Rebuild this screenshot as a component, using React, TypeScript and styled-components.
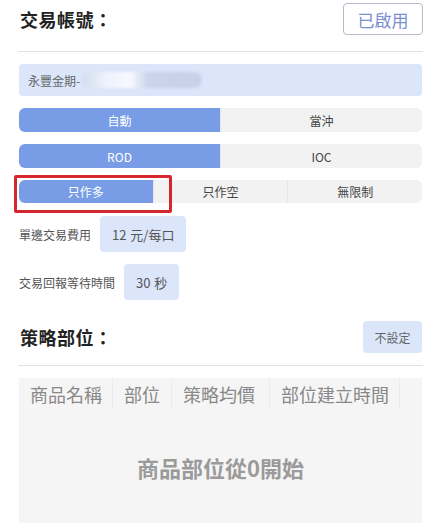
import styled, { createGlobalStyle } from 'styled-components';

const GlobalStyle = createGlobalStyle`
    html, body {
        margin: 0;
        padding: 0;
        background: #ffffff;
    }
    body {
        font-family: "Noto Sans CJK TC", "Noto Sans", "Liberation Sans", sans-serif;
        color: #333;
    }
`

const Page = styled.div`
    width: 435px;
    box-sizing: border-box;
    padding: 3px 13px 0 19px;
    display: flex;
    flex-direction: column;
`

const SectionHeader = styled.div<{ $h: number; $mt?: number }>`
    display: flex;
    align-items: center;
    justify-content: space-between;
    height: ${(p) => p.$h}px;
    margin-top: ${(p) => p.$mt ?? 0}px;
`

const Title = styled.div`
    font-size: 18px;
    font-weight: 700;
    color: #222;
    letter-spacing: 0.5px;
    padding-left: 1px;
`

const OutlineButton = styled.button`
    height: 32px;
    width: 80px;
    margin-right: -1px;
    border: 1px solid #b3bccf;
    border-radius: 4px;
    background: #fff;
    color: #7990d0;
    font-family: inherit;
    font-size: 17px;
    padding: 0;
`

const SoftButton = styled.button`
    height: 32px;
    width: 59px;
    border: none;
    border-radius: 4px;
    background: #dbe6fb;
    color: #666;
    font-family: inherit;
    font-size: 12px;
    padding: 0;
`

const Divider = styled.div<{ $top: number; $bottom: number }>`
    height: 1px;
    background: #e2e2e2;
    margin: ${(p) => p.$top}px -1px ${(p) => p.$bottom}px -1px;
`

const AccountField = styled.div`
    height: 32px;
    border-radius: 4px;
    background: #dbe6fb;
    display: flex;
    align-items: center;
    padding-left: 9px;
    font-size: 12px;
    color: #666;
`

const Blurred = styled.span`
    display: inline-block;
    width: 120px;
    height: 16px;
    margin-left: 2px;
    border-radius: 8px;
    background: linear-gradient(90deg, #d3dcef 0%, #eef2fb 20%, #f7f9fe 40%, #c9d3ea 55%, #c7d1e9 100%);
    filter: blur(1.5px);
`

const SegWrap = styled.div<{ $mt: number }>`
    position: relative;
    margin-top: ${(p) => p.$mt}px;
`

const SegGroup = styled.div<{ $h: number }>`
    display: flex;
    height: ${(p) => p.$h}px;
    border-radius: 6px;
    overflow: hidden;
    background: #f2f2f2;
`

const Seg = styled.div<{ $active?: boolean }>`
    flex: 1;
    display: flex;
    align-items: center;
    justify-content: center;
    font-size: 12px;
    color: ${(p) => (p.$active ? '#fff' : '#444')};
    background: ${(p) => (p.$active ? '#789de6' : '#f2f2f2')};
    & + & {
        border-left: 1px solid ${(p) => (p.$active ? '#789de6' : '#e6e6e6')};
    }
`

const Highlight = styled.div`
    position: absolute;
    left: -5px;
    top: -5px;
    width: 158px;
    height: 38px;
    box-sizing: border-box;
    border: 3px solid #d7262f;
    border-radius: 2px;
    pointer-events: none;
`

const FieldRow = styled.div<{ $mt: number }>`
    display: flex;
    align-items: center;
    gap: 9px;
    margin-top: ${(p) => p.$mt}px;
`

const FieldLabel = styled.span`
    font-size: 12px;
    color: #555;
`

const ValueBox = styled.div`
    height: 36px;
    display: flex;
    align-items: center;
    padding: 0 12px;
    border-radius: 4px;
    background: #dbe6fb;
    font-size: 13px;
    color: #555;
    word-spacing: 1px;
`

const TableBox = styled.div`
    height: 145px;
    background: #f5f5f5;
    display: flex;
    flex-direction: column;
`

const HeadRow = styled.div`
    display: flex;
    height: 40px;
`

const HeadCell = styled.div<{ $w: number }>`
    width: ${(p) => p.$w}px;
    flex: none;
    box-sizing: border-box;
    padding: 0 11px;
    display: flex;
    align-items: center;
    font-size: 18px;
    color: #888;
    white-space: nowrap;
    border-right: 1px solid #ebebeb;
    margin-bottom: 8px;
`

const Empty = styled.div`
    flex: 1;
    display: flex;
    align-items: center;
    justify-content: center;
    font-size: 22px;
    font-weight: 700;
    color: #9a9a9a;
    padding-bottom: 8px;
`

const columns = [
    { label: '商品名稱', w: 94 },
    { label: '部位', w: 59 },
    { label: '策略均價', w: 98 },
    { label: '部位建立時間', w: 130 },
]

export default function App() {
    return <>
        <GlobalStyle />
        <Page>
            <SectionHeader $h={32}>
                <Title>交易帳號：</Title>
                <OutlineButton>已啟用</OutlineButton>
            </SectionHeader>
            <Divider $top={16} $bottom={12} />
            <AccountField>永豐金期-<Blurred /></AccountField>

            <SegWrap $mt={12}>
                <SegGroup $h={24}>
                    <Seg $active>自動</Seg>
                    <Seg>當沖</Seg>
                </SegGroup>
            </SegWrap>
            <SegWrap $mt={12}>
                <SegGroup $h={24}>
                    <Seg $active>ROD</Seg>
                    <Seg>IOC</Seg>
                </SegGroup>
            </SegWrap>
            <SegWrap $mt={12}>
                <SegGroup $h={23}>
                    <Seg $active>只作多</Seg>
                    <Seg>只作空</Seg>
                    <Seg>無限制</Seg>
                </SegGroup>
                <Highlight />
            </SegWrap>

            <FieldRow $mt={13}>
                <FieldLabel>單邊交易費用</FieldLabel>
                <ValueBox>12 元/每口</ValueBox>
            </FieldRow>
            <FieldRow $mt={12}>
                <FieldLabel>交易回報等待時間</FieldLabel>
                <ValueBox>30 秒</ValueBox>
            </FieldRow>

            <SectionHeader $h={32} $mt={21}>
                <Title>策略部位：</Title>
                <SoftButton>不設定</SoftButton>
            </SectionHeader>
            <Divider $top={12} $bottom={12} />

            <TableBox>
                <HeadRow>
                    {columns.map((c) => <HeadCell key={c.label} $w={c.w}>{c.label}</HeadCell>)}
                </HeadRow>
                <Empty>商品部位從0開始</Empty>
            </TableBox>
        </Page>
    </>
}
